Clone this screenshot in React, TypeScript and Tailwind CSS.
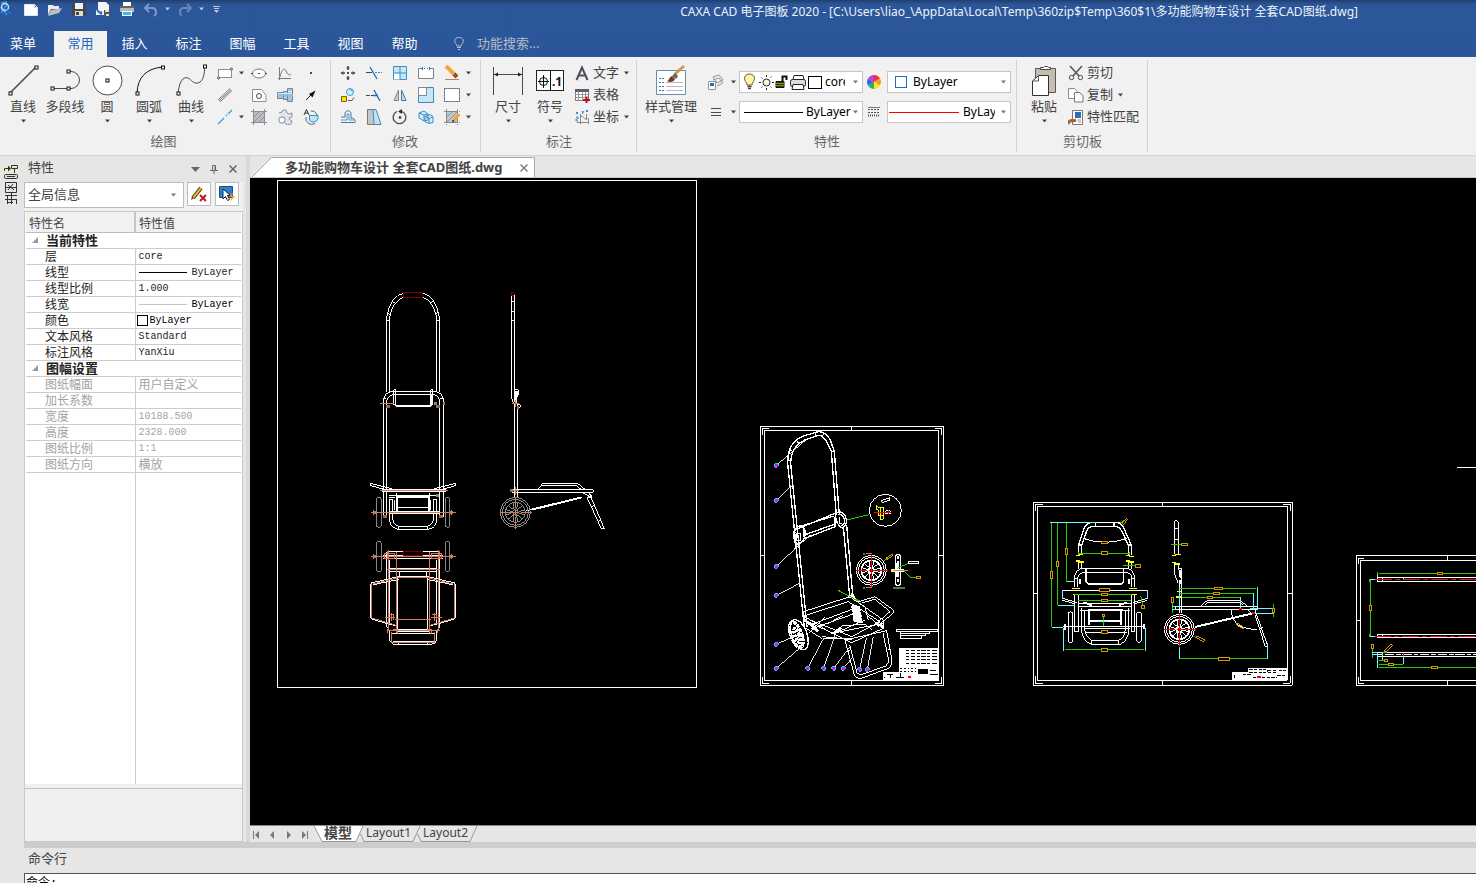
import React from 'react';

type IconProps = { children: React.ReactNode; size?: number; box?: string };

const Icon = ({ children, size = 16, box }: IconProps) => (
  <svg width={size} height={size} viewBox={box ?? `0 0 ${size} ${size}`} fill="none" stroke="#444c57" className="shrink-0" aria-hidden="true">
    {children}
  </svg>
);

const Caret = ({ className = 'fill-[#444]' }: { className?: string }) => (
  <svg width="5" height="4" viewBox="0 0 5 4" className={`shrink-0 ${className}`} aria-hidden="true">
    <path d="M0 0.5h5L2.5 3.5z" />
  </svg>
);

const Node = ({ x, y }: { x: number; y: number }) => (
  <rect x={x - 1.5} y={y - 1.5} width="3" height="3" fill="#fff" stroke="#111" />
);

/* ---------- title bar ---------- */

const quickActions = [
  {
    label: '新建',
    icon: <path d="M1.5 3.5h10l3 3v8h-13z M11.5 3.5v3h3" fill="#fff" stroke="#dde6f2" />,
  },
  {
    label: '打开',
    icon: (
      <g stroke="none">
        <path d="M1 4h5l1 1h5v3H4L1 14z" fill="#e9e9e9" />
        <path d="M4 9l11-2-3 5-11 3z" fill="#bdbdbd" />
      </g>
    ),
  },
  {
    label: '保存',
    icon: (
      <g stroke="none">
        <path d="M1 2h14v13H1z" fill="#474747" />
        <path d="M4 2h8v6H4z" fill="#f2f2f2" />
        <path d="M4 10h8v5H4z" fill="#ddd" />
        <path d="M5 11h3v3H5z" fill="#444" />
      </g>
    ),
  },
  {
    label: '另存为',
    icon: (
      <g stroke="none">
        <path d="M3 1h8l3 3v10H1V9h2z" fill="#f4f4f4" />
        <path d="M2 9l3 3 2-1M5 12l2 1" stroke="#2f6fb5" strokeWidth="2" />
        <path d="M9 9h6v6H9z" fill="#555" />
        <path d="M10 9h4v2h-4zM11 13h3v2h-3z" fill="#ddd" />
      </g>
    ),
  },
  {
    label: '打印',
    icon: (
      <g stroke="none">
        <path d="M4 1h8v4H4z" fill="#fff" />
        <path d="M1 5h14v6H1z" fill="#b9b9b9" />
        <path d="M1 5h14v2H1z" fill="#666" />
        <path d="M3 10h10v5H3z" fill="#fff" />
        <path d="M4 11h8v3H4z" fill="#38bdea" />
      </g>
    ),
  },
];

const TitleBar = () => (
  <div className="flex h-[31px] items-start bg-linear-to-b from-[#213f6e] to-[#2b579a] to-15%">
    <div className="flex h-[18px] items-center">
      <svg width="20" height="16" viewBox="0 0 20 16" fill="none" className="mr-[3px]" aria-hidden="true">
        <path d="M1 2l6-1M1 6l6 8M7 3l-6 9" stroke="#2e8fe8" strokeWidth="2" />
        <circle cx="5" cy="6" r="3.500" stroke="#bfe0ff" strokeWidth="1.500" />
        <path d="M7 9l4 4" stroke="#1671d4" strokeWidth="2" />
      </svg>
      <div className="flex gap-2">
        {quickActions.map((a) => (
          <button key={a.label} aria-label={a.label} type="button">
            <Icon>{a.icon}</Icon>
          </button>
        ))}
      </div>
      <button type="button" aria-label="撤销" className="ml-2 flex items-center gap-[6px]">
        <Icon>
          <path d="M6 3L2 7l4 4M2 7h7c5 0 5 6 2 8" stroke="#7b9aca" strokeWidth="2" />
        </Icon>
        <Caret className="fill-[#b9c6dd]" />
      </button>
      <button type="button" aria-label="重做" className="ml-[7px] flex items-center gap-[6px]">
        <Icon>
          <path d="M10 3l4 4-4 4M14 7H7c-5 0-5 6-2 8" stroke="#6787bb" strokeWidth="2" />
        </Icon>
        <Caret className="fill-[#b9c6dd]" />
      </button>
      <button type="button" aria-label="自定义快速访问" className="ml-[9px] pt-[2px]">
        <svg width="7" height="8" viewBox="0 0 7 8" fill="#c3cbd8">
          <path d="M0 0h7v1H0zM1 2h5v1H1zM1 4h5L3.500 7z" />
        </svg>
      </button>
    </div>
    <h1 className="mr-[118px] ml-auto pt-[3px] text-[12px] leading-[18px] whitespace-nowrap text-[#eef2f8]">
      CAXA CAD 电子图板 2020 - [C:\Users\liao_\AppData\Local\Temp\360zip$Temp\360$1\多功能购物车设计 全套CAD图纸.dwg]
    </h1>
  </div>
);

const menus = ['常用', '插入', '标注', '图幅', '工具', '视图', '帮助'];

const MenuBar = () => (
  <nav className="flex h-[26px] text-[13px] leading-[22px]">
    <button type="button" className="w-[46px] pb-[3px] text-white">菜单</button>
    <div className="ml-2 flex gap-[1px]">
      {menus.map((m, i) => (
        <button key={m} type="button" className={i === 0 ? 'w-[53px] bg-[#f1f1f1] pb-[3px] text-[#1e66c0]' : 'w-[53px] pb-[3px] text-white'}>
          {m}
        </button>
      ))}
    </div>
    <label className="ml-[23px] flex items-center gap-[13px] pb-[3px]">
      <svg width="10" height="13" viewBox="0 0 10 13" fill="none" stroke="#b7bfcc" className="mt-[2px]" aria-hidden="true">
        <path d="M3 9C3 7 0.700 6.500 0.700 4.200A4.300 4 0 0 1 9.300 4.200C9.300 6.500 7 7 7 9z" />
        <path d="M3 10.500h4M4 12.500h2" />
      </svg>
      <input type="text" aria-label="功能搜索" placeholder="功能搜索..." className="w-24 bg-transparent outline-none placeholder:text-[#b5bbc5]" />
    </label>
  </nav>
);

/* ---------- ribbon ---------- */

const Group = ({ title, width, children }: { title: string; width: string; children: React.ReactNode }) => (
  <section aria-label={title} className={`mt-[3px] mb-[3px] flex shrink-0 flex-col border-r border-[#d2d2d2] ${width}`}>
    <div className="flex h-[71px]">{children}</div>
    <div className="pr-[5px] text-center text-[13px] leading-[20px] text-[#666]">{title}</div>
  </section>
);

type BigProps = { label: string; icon: React.ReactNode; width?: string; caret?: boolean };

const BigButton = ({ label, icon, width = 'w-[42px]', caret = true }: BigProps) => (
  <button type="button" className={`flex shrink-0 flex-col items-center pt-[4px] text-[13px] leading-[20px] whitespace-nowrap text-[#444] ${width}`}>
    <Icon size={32}>{icon}</Icon>
    {label}
    {caret && <span className="mt-[3px]"><Caret /></span>}
  </button>
);

const drawTools: BigProps[] = [
  { label: '直线', icon: <><path d="M3 29L29 3" strokeWidth="1.600" /><Node x={3.5} y={29.5} /><Node x={29.5} y={3.5} /></> },
  { label: '多段线', caret: false, icon: <><path d="M3 24.500H22a8.500 8.500 0 0 0 0-17H19" /><Node x={3.5} y={24.5} /><Node x={19.5} y={24.5} /><Node x={19.5} y={7.5} /></> },
  { label: '圆', icon: <><circle cx="16.500" cy="16.500" r="14.500" fill="#fff" /><Node x={16.5} y={16.5} /></> },
  { label: '圆弧', icon: <><path d="M4 29Q5 5 30 3" stroke="#111" /><Node x={4.5} y={29.5} /><Node x={30} y={3.5} /></> },
  { label: '曲线', icon: <><path d="M3 30C4 18 8 12 13 14C17 16 18 20 23 19C29 17 29 10 30 2" /><Node x={3.5} y={29.5} /><Node x={30} y={2.5} /></> },
];

type Small = { label: string; icon: React.ReactNode; caret?: boolean };

const drawGrid: Small[] = [
  { label: '矩形', caret: true, icon: <><rect x="1.500" y="4.500" width="13" height="8" fill="#fff" stroke="#8b8f94" /><circle cx="14.500" cy="4" r="1" fill="#fff" /><circle cx="1.500" cy="13" r="1" fill="#fff" /></> },
  { label: '椭圆', icon: <><ellipse cx="8" cy="8.500" rx="6.500" ry="4.500" fill="#fff" stroke="#777" /><path d="M7 8.500h2M0 8.500h2M14 8.500h2" /></> },
  { label: '公式曲线', icon: <path d="M2.500 2v13M1 13.500h13M3 12C5 3 8 3 9 6S12 10 14 10" stroke="#777c83" /> },
  { label: '点', icon: <path d="M7 8h2" strokeWidth="2" /> },
  { label: '平行线', icon: <path d="M1 13L13 1.500M3 15L15 3.500M2 14L14 2.500" stroke="#777" /> },
  { label: '孔', icon: <><path d="M1.500 2.500h9l4.500 6v6H1.500z" fill="#fff" stroke="#8b8f94" /><circle cx="8" cy="9" r="2.500" /></> },
  { label: '轴', icon: <><path d="M0.500 5.500h6v6h-6zM6.500 4.500h4v8h-4zM10.500 1.500h5v13h-5z" fill="#a9c4dc" stroke="#6d8aa2" /><path d="M0 8.500h16" stroke="#7cc4f0" strokeWidth="1.500" /><path d="M1 6.500h14M11 4.500h4" stroke="#e3eef8" /></> },
  { label: '箭头', icon: <><path d="M3 13l5-5" stroke="#222" /><path d="M12.500 3.500L6 7l3.500 3.500z" fill="#111" stroke="none" /></> },
  { label: '中心线', caret: true, icon: <path d="M1 15L7 9M9 7l1-1M11 5l4-4" stroke="#27a3e0" strokeWidth="1.300" /> },
  { label: '填充', icon: <><path d="M2.500 2.500h11v11h-11z" fill="#b9bcc1" /><path d="M0 2.500h16M0 13.500h16M2.500 0v16M13.500 0v16" stroke="#8b8f94" /><path d="M3 8l5-5M3 13L13 3M8 13l5-5" stroke="#909399" /></> },
  { label: '块', icon: <><path d="M2 4l3-1 1-2h3l1 3 2 1 3-1v4l-3 1 1 2 2 1-1 3-4 1-2-2" fill="#dfe3ea" stroke="#8a93a0" /><circle cx="5" cy="11" r="3.200" fill="#fff" stroke="#7a8490" /></> },
  { label: '局部放大', icon: <><path d="M6.500 6.500h8.500v3a5 5 0 0 1-8.500 2z" fill="#bfe2f8" stroke="#2a8fd0" /><path d="M3 8a6 6 0 0 0 9 6.500M8 2a6 6 0 0 1 6 4" stroke="#666" /><path d="M1 6L3.500 0.500 6 6M2 4h3" stroke="#333" /></> },
];

const editGrid: Small[] = [
  { label: '平移', icon: <><path d="M8 1v4M8 11v4M1 8h4M11 8h4" strokeWidth="1.500" /><path d="M6 3.500L8 1l2 2.500zM6 12.500L8 15l2-2.500zM3.500 6L1 8l2.500 2zM12.500 6L15 8l-2.500 2z" fill="#444c57" stroke="none" /><path d="M7 8h2" strokeWidth="2" /></> },
  { label: '裁剪', icon: <><path d="M0 7.500h6" stroke="#444" /><path d="M9 7.500h7" stroke="#2a8fd0" strokeDasharray="2 1" /><path d="M4 2l7 12" stroke="#1470c8" strokeWidth="1.300" /></> },
  { label: '阵列', icon: <><path d="M1.500 1.500h13v13h-13z" fill="#c5e6fa" stroke="#3f8fc0" /><path d="M2 8.500h6v6H2z" fill="#fff" stroke="none" /><path d="M8 1v14M1 8h14" stroke="#3f8fc0" /></> },
  { label: '打断', icon: <><path d="M5 3.500H0.500v10h15v-10H11" fill="#fff" stroke="#7d8288" /><path d="M4.500 2v3M11.500 2v3M6 3.500h1M9 3.500h1" stroke="#1470c8" /></> },
  { label: '删除', caret: true, icon: <><path d="M2 1l8 8" stroke="#efa63a" strokeWidth="4" /><path d="M10 9l3 3" stroke="#8f4a20" strokeWidth="4" /><path d="M1 14.500h14" stroke="#c77b5a" /></> },
  { label: '平移复制', icon: <><circle cx="10" cy="5" r="3.500" fill="#d5ecfa" stroke="#4a9cd0" /><path d="M9 2l5 3" stroke="#4a9cd0" /><path d="M1.500 9.500h5v5h-5z" fill="#ffe100" stroke="#6b6b00" /><path d="M8 13.500h4l2-3" stroke="#a33" /></> },
  { label: '延伸', icon: <><path d="M0 8.500h4M5 8.500h2" stroke="#444" /><path d="M7 8.500h5M8 3l6 11" stroke="#1470c8" strokeWidth="1.300" /></> },
  { label: '镜像', icon: <><path d="M6.500 3v10.500H2z" fill="#ccc" stroke="#888" /><path d="M9.500 3v10.500H14z" fill="#bfe2f8" stroke="#55758c" /></> },
  { label: '缩放', icon: <><path d="M0.500 0.500h15v15H0.500z" fill="#c5e6fa" stroke="#4f86a5" /><path d="M0.500 0.500h8v8h-8z" fill="#fff" stroke="#7a8a94" /></> },
  { label: '分解', caret: true, icon: <><path d="M0.500 1.500h15v13H0.500z" fill="#fff" stroke="#a3b4bf" /><path d="M0.500 1.500h15v13H0.500z" strokeDasharray="2 1" stroke="#5b6f7d" /></> },
  { label: '等距线', icon: <><path d="M1 13.500h14c1-4-3-5-4-4V4c-1-3-5-3-6 0v4H1" stroke="#55758c" /><path d="M1 11h6V5h2v6h5" stroke="#3f9fd8" /></> },
  { label: '拉伸', icon: <><path d="M1.500 0.500h8v15h-8z" fill="#c3c6ca" stroke="#777" /><path d="M7 0.500h3l5 15H8z" fill="#bfe2f8" stroke="#4f86a5" /></> },
  { label: '旋转', icon: <><path d="M10 2.500A6.300 6.300 0 1 1 5 2.500" strokeWidth="1.300" /><path d="M10 0l-4 2.500 4 2.500z" fill="#333" stroke="none" /><circle cx="8" cy="8.500" r="1" fill="#333" /></> },
  { label: '三维', icon: <path d="M1 4l5-2 4 3v6l-4 1-5-3zM1 4l5 2v6M6 6l4-1M7 7.500l5-2 3 2v6l-4 1-4-2zM7 7.500l4 2v5M11 9.500l4-2" fill="#d5ecfa" stroke="#3d8fc8" /> },
  { label: '编辑填充', caret: true, icon: <><path d="M2.500 2.500h11v11h-11z" fill="#c3c6ca" stroke="#777" /><path d="M0 2.500h16M0 13.500h16M2.500 0v16M13.500 0v16" stroke="#8b8f94" strokeDasharray="2 1" /><path d="M3 8l5-5M3 13L13 3" stroke="#909399" /><path d="M10 11l5-6" stroke="#f0a432" strokeWidth="3" /><path d="M8.500 12.500l1.500-1" stroke="#333" strokeWidth="2" /></> },
];

const SmallButton = ({ label, icon, caret }: Small) => (
  <button type="button" aria-label={label} className={`flex h-[22px] items-center pl-[5px] ${caret ? 'w-[34px] gap-[6px]' : 'w-[26px]'}`}>
    <Icon>{icon}</Icon>
    {caret && <Caret />}
  </button>
);

const RowButton = ({ label, icon, caret }: Small) => (
  <button type="button" className="flex h-[22px] items-center gap-[3px] text-[13px] leading-[20px] whitespace-nowrap text-[#444]">
    <Icon>{icon}</Icon>
    <span className="pb-[2px]">{label}</span>
    {caret && <span className="ml-[2px]"><Caret /></span>}
  </button>
);

const annotationRows: Small[] = [
  { label: '文字', caret: true, icon: <path d="M2.500 15L8 2.500 13.500 15M5 10.500h6" stroke="#4a4f57" strokeWidth="2" /> },
  { label: '表格', icon: <><path d="M1.500 2.500h13v11h-13z" fill="#fff" stroke="#777" /><path d="M1 3.500h14" stroke="#59626d" strokeWidth="3" /><path d="M1 7.500h13M1 10.500h13M4.500 5v9M8.500 5v9M11.500 5v9" stroke="#999" /><path d="M9 13h7M12.500 9.500v7" stroke="#c00d1e" strokeWidth="2" /></> },
  { label: '坐标', caret: true, icon: <><path d="M6.500 5v10M3 13.500h12M7 7c3 0 2 3 5 3M12.500 5v6M14.500 9v6" stroke="#888" /><path d="M2 3l2 2m0-2L2 5M8 2l1 2m1-2L8 5M12 1l2 2m0-2l-2 2M2 8h2v2H2v2h2" stroke="#3b8ccb" /></> },
];

const clipRows: Small[] = [
  { label: '剪切', icon: <><path d="M2 1l9 10M14 1L5 11" stroke="#5d6269" strokeWidth="1.800" /><circle cx="3.500" cy="12.500" r="2.200" /><circle cx="12.500" cy="12.500" r="2.200" /></> },
  { label: '复制', caret: true, icon: <><path d="M0.500 1.500h6l3 3v7h-9z" fill="#fff" stroke="#8a8a8a" /><path d="M6.500 5.500h5l3.500 3v6.500H6.500z" fill="#fff" stroke="#777" /></> },
  { label: '特性匹配', icon: <><path d="M4.500 1.500h10v14h-10z" fill="#fff" stroke="#777" /><path d="M7 3h6v6H7z" fill="#2c6fae" stroke="none" /><path d="M9 11h4M10 13h3" stroke="#999" /><path d="M0 15c1-3 3-4 5-3l3-1" stroke="#a9622c" strokeWidth="3" /></> },
];

type ComboProps = { label: string; value: string; lead: React.ReactNode; caretGap?: string };

const Combo = ({ label, value, lead, caretGap = 'ml-[6px]' }: ComboProps) => (
  <div className="flex h-[22px] w-[124px] items-center border border-[#c6c6c6] bg-white pr-[4px]">
    {lead}
    <select aria-label={label} className="min-w-0 flex-1 appearance-none overflow-hidden bg-transparent text-[12px] leading-[18px] text-black outline-none">
      <option>{value}</option>
    </select>
    <span className={caretGap}><Caret className="fill-[#777]" /></span>
  </div>
);

const LayerIcons = () => (
  <svg width="85" height="20" viewBox="0 0 85 20" fill="none" stroke="#222" className="shrink-0" aria-hidden="true">
    <path d="M7 13C7 10 4.500 9.500 4.500 6.500a5 4.500 0 0 1 10 0C14.500 9.500 12 10 12 13z" fill="#fff4a8" stroke="#6a5a20" />
    <path d="M7.500 14.500h4M8 16.500h3" stroke="#444" strokeWidth="1.500" />
    <circle cx="26.500" cy="10.500" r="3.500" fill="#fffbe0" />
    <path d="M26.500 3v2M26.500 16v2M19 10.500h2M32 10.500h2M21.500 5.500l1 1M30.500 5.500l1-1M21.500 15.500l1-1M30.500 14.500l1 1" />
    <path d="M36 9.500h8v6h-8z" fill="#3a3a00" stroke="#111" />
    <path d="M36 11.500h8M36 13.500h8" stroke="#8c8c20" />
    <path d="M42.500 9V4.500h4V8" stroke="#111" strokeWidth="2" />
    <path d="M54 3.500h9l1 4H53z" fill="#fff" />
    <rect x="50.500" y="7.500" width="15" height="7" rx="2" fill="#ddd" />
    <path d="M53 12.500h10l1 5H52z" fill="#fff" />
    <rect x="68.500" y="4.500" width="13" height="12" fill="#fff" stroke="#000" />
  </svg>
);

const wedges = [
  ['#f03030', 'M7 7V0A7 7 0 0 1 13 3.500z'],
  ['#f0a020', 'M7 7L13 3.500A7 7 0 0 1 13 10.500z'],
  ['#f5e430', 'M7 7L13 10.500A7 7 0 0 1 7 14z'],
  ['#2cb54a', 'M7 7V14A7 7 0 0 1 1 10.500z'],
  ['#3b62e8', 'M7 7L1 10.500A7 7 0 0 1 1 3.500z'],
  ['#c23be0', 'M7 7L1 3.500A7 7 0 0 1 7 0z'],
];

const Ribbon = () => (
  <div className="flex h-[99px] overflow-hidden border-b border-[#d5d5d5] bg-[#f1f1f1]">
    <Group title="绘图" width="w-[331px] pl-[2px]">
      {drawTools.map((t) => <BigButton key={t.label} {...t} />)}
      <div className="grid grid-cols-[34px_26px_26px_26px] content-start pt-[2px]">
        {drawGrid.map((t) => <SmallButton key={t.label} {...t} />)}
      </div>
    </Group>
    <Group title="修改" width="w-[150px] pl-[4px]">
      <div className="grid grid-cols-[26px_26px_26px_26px_34px] content-start pt-[2px]">
        {editGrid.map((t) => <SmallButton key={t.label} {...t} />)}
      </div>
    </Group>
    <Group title="标注" width="w-[156px] pl-[6px]">
      <BigButton label="尺寸" icon={<><path d="M1.500 3v28M30.500 3v28M2 10.500h28" /><path d="M2 10.500l4-2v4zM30 10.500l-4-2v4z" fill="#222" stroke="none" /></>} />
      <BigButton
        label="符号"
        icon={
          <>
            <rect x="2.500" y="6.500" width="27" height="20" fill="#fff" stroke="#222" />
            <path d="M16.500 6v21M4 17.500h11M9.500 11v13" stroke="#111" />
            <circle cx="9.500" cy="17.500" r="4" stroke="#111" />
            <text x="18" y="22" fontSize="12" fontWeight="700" fill="#111" stroke="none">.1</text>
          </>
        }
      />
      <div className="ml-[3px] pt-[2px]">
        {annotationRows.map((t) => <RowButton key={t.label} {...t} />)}
      </div>
    </Group>
    <Group title="特性" width="w-[380px] pl-[6px]">
      <BigButton
        label="样式管理"
        width="w-[56px]"
        icon={
          <>
            <path d="M1.500 6.500h29v24h-29z" fill="#fff" stroke="#6f8fa8" />
            <path d="M4 14.500h5M4 18.500h5M4 22.500h5M4 26.500h5" stroke="#3974b5" strokeDasharray="2 1" />
            <path d="M11 18.500h17M11 22.500h17M11 26.500h17" stroke="#b9bcc8" />
            <path d="M20 10l9-8" stroke="#d8954a" strokeWidth="3" />
            <path d="M17 12l3-3 3 3-2 3z" fill="#666" stroke="none" />
            <path d="M12 17c2 0 2-4 5-5l3 3c-1 3-5 4-8 2z" fill="#7a3c12" stroke="none" />
          </>
        }
      />
      <div className="ml-[9px] flex flex-col gap-[8px] pt-[11px]">
        <button type="button" aria-label="图层" className="flex h-[22px] items-center gap-[7px]">
          <Icon>
            <path d="M5 3l6-2 4 5-6 3zM5 6l6-2 4 5-6 3" fill="#eef0f2" stroke="#8d949c" />
            <path d="M0.500 7.500h7v8h-7z" fill="#fff" stroke="#8d949c" />
            <path d="M2 9h4v3H2z" fill="#2c6fae" stroke="none" />
          </Icon>
          <Caret />
        </button>
        <button type="button" aria-label="线宽" className="flex h-[22px] items-center gap-[7px]">
          <Icon><path d="M3 4.500h10M3 8.500h10M3 11.500h10" strokeWidth="1.200" /></Icon>
          <Caret />
        </button>
      </div>
      <div className="ml-[3px] flex flex-col gap-[8px] pt-[11px]">
        <Combo label="图层" value="core" caretGap="ml-[8px]" lead={<LayerIcons />} />
        <Combo label="线型" value="ByLayer" caretGap="ml-[1px]" lead={<span className="mr-[3px] ml-[4px] h-px w-[59px] shrink-0 bg-black" />} />
      </div>
      <div className="ml-[4px] flex flex-col items-center gap-[8px] pt-[11px]">
        <span className="flex h-[22px] items-center">
          <svg width="14" height="14" viewBox="0 0 14 14" aria-hidden="true">
            {wedges.map(([fill, d]) => <path key={d} d={d} fill={fill} />)}
          </svg>
        </span>
        <span className="flex h-[22px] items-center">
          <Icon size={14} box="0 0 14 14">
            <path d="M1 2.500h12" stroke="#777" />
            <path d="M1 4.500h12M1 7.500h12" stroke="#555" strokeDasharray="2 1" />
            <path d="M1 10.500h12" stroke="#555" strokeWidth="2" strokeDasharray="1 1" />
          </Icon>
        </span>
      </div>
      <div className="ml-[6px] flex flex-col gap-[8px] pt-[11px]">
        <Combo label="颜色" value="ByLayer" lead={<span className="mr-[6px] ml-[7px] size-3 shrink-0 border border-[#1470c8]" />} />
        <Combo label="线宽" value="ByLayer" lead={<span className="mr-[4px] ml-[1px] h-px w-[70px] shrink-0 bg-[#ff0000]" />} />
      </div>
    </Group>
    <Group title="剪切板" width="w-[131px] pl-[6px]">
      <BigButton
        label="粘贴"
        icon={
          <>
            <path d="M7.500 4.500h20v24h-20z" fill="#c5beb0" stroke="#55585c" />
            <path d="M12.500 5.500v-2h3l1-1h3l1 1h2v2z" fill="#fff" stroke="#444" />
            <path d="M10.500 11.500L4.500 17v14.500h16v-20z" fill="#fff" stroke="#333" />
            <path d="M10.500 11.500V17h-6" stroke="#555" />
          </>
        }
      />
      <div className="ml-[3px] pt-[2px]">
        {clipRows.map((t) => <RowButton key={t.label} {...t} />)}
      </div>
    </Group>
  </div>
);

/* ---------- property panel ---------- */

type Prop = { name: string; value: React.ReactNode };

const current: Prop[] = [
  { name: '层', value: 'core' },
  { name: '线型', value: <span className="flex items-center gap-[5px]"><i className="w-[48px] border-t border-black" />ByLayer</span> },
  { name: '线型比例', value: '1.000' },
  { name: '线宽', value: <span className="flex items-center gap-[5px] text-black"><i className="w-[48px] border-t border-[#c4c4c4]" />ByLayer</span> },
  { name: '颜色', value: <span className="flex items-center gap-[2px] text-black"><i className="-ml-[2px] size-[11px] border border-black" />ByLayer</span> },
  { name: '文本风格', value: 'Standard' },
  { name: '标注风格', value: 'YanXiu' },
];

const sheet: Prop[] = [
  { name: '图纸幅面', value: <span className="block font-[Noto_Sans,Noto_Sans_CJK_SC,sans-serif] text-[12px]">用户自定义</span> },
  { name: '加长系数', value: '' },
  { name: '宽度', value: '10188.500' },
  { name: '高度', value: '2328.000' },
  { name: '图纸比例', value: '1:1' },
  { name: '图纸方向', value: <span className="block font-[Noto_Sans,Noto_Sans_CJK_SC,sans-serif] text-[12px]">横放</span> },
];

const PropRows = ({ title, rows, muted }: { title: string; rows: Prop[]; muted?: boolean }) => (
  <tbody className={muted ? 'text-[#a3a3a3]' : 'text-[#222]'}>
    <tr className="h-[16px] border-b border-[#cdcdcd]">
      <th colSpan={2} className="p-0 text-left font-bold text-[#222]">
        <span className="flex items-center pl-[6px] text-[13px] leading-[15px]">
          <svg width="6" height="6" viewBox="0 0 6 6" className="mr-[8px] fill-[#999]"><path d="M6 0v6H0z" /></svg>
          {title}
        </span>
      </th>
    </tr>
    {rows.map((r) => (
      <tr key={r.name} className="h-[16px] border-b border-[#cdcdcd]">
        <th className="border-r border-[#cdcdcd] p-0 pl-[19px] text-left font-normal">{r.name}</th>
        <td className="overflow-hidden p-0 pl-[3px] font-[Liberation_Mono,Noto_Sans_CJK_SC,monospace] text-[10px] leading-[15px] whitespace-nowrap">{r.value}</td>
      </tr>
    ))}
  </tbody>
);

const PropertyPanel = () => (
  <aside className="flex w-[219px] shrink-0 flex-col">
    <div className="flex h-[26px] items-center pr-[6px] pl-[4px] text-[13px] text-[#444]">
      <h2 className="mr-auto pb-[4px] leading-[22px]">特性</h2>
      <button type="button" aria-label="菜单" className="mr-[10px]">
        <svg width="9" height="5" viewBox="0 0 9 5" fill="#666"><path d="M0 0h9L4.500 5z" /></svg>
      </button>
      <button type="button" aria-label="固定" className="mr-[11px]">
        <svg width="8" height="9" viewBox="0 0 8 9" fill="none" stroke="#666"><path d="M2.500 5V0.500h3V5M0 5.500h8M4 6v3" /><path d="M5 1v4" /></svg>
      </button>
      <button type="button" aria-label="关闭">
        <svg width="8" height="8" viewBox="0 0 8 8" stroke="#666" strokeWidth="1.500"><path d="M0.500 0.500l7 7M7.500 0.500l-7 7" /></svg>
      </button>
    </div>
    <div className="flex h-[29px] gap-[3px] bg-[#f1f1f1]">
      <div className="flex h-[26px] w-[160px] items-center border border-[#bdbdbd] bg-white pr-[7px] pl-[3px]">
        <select aria-label="选择对象" className="mb-[2px] min-w-0 flex-1 appearance-none bg-transparent text-[13px] leading-[22px] text-[#444] outline-none">
          <option>全局信息</option>
        </select>
        <Caret className="fill-[#777]" />
      </div>
      <button type="button" aria-label="清除选择" className="flex size-[24px] items-center justify-center border border-[#bdbdbd] bg-white">
        <Icon>
          <path d="M2 12L10 2" stroke="#54480f" strokeWidth="4" />
          <path d="M2 12L10 2" stroke="#f0c040" strokeWidth="2" />
          <path d="M0 14l1-3 2 1z" fill="#333" stroke="none" />
          <path d="M9 9l6 6M15 9l-6 6" stroke="#b81c1c" strokeWidth="2" />
        </Icon>
      </button>
      <button type="button" aria-label="快速选择" className="ml-[1px] flex size-[24px] items-center justify-center border border-[#bdbdbd] bg-white">
        <Icon>
          <path d="M0.500 0.500h13v11h-13z" fill="#2f7fd0" stroke="#174f8c" />
          <path d="M4 3v10l2.500-2.500 2 4 2-1-2-4h3z" fill="#fff" stroke="#222" />
          <path d="M14 6l-4 5h3l-2 5 5-6h-3z" fill="#f59a1c" stroke="none" />
        </Icon>
      </button>
    </div>
    <div className="flex flex-1 flex-col border border-[#c8c8c8] bg-white px-[1px]">
      <table className="w-full table-fixed border-collapse text-[12px] leading-[15px]">
        <thead className="text-[#444]">
          <tr className="h-[20px] border-b border-[#bdbdbd] bg-[#f1f1f1]">
            <th className="w-[109px] border-r-2 border-[#c4c4c4] p-0 pt-[3px] pl-[3px] text-left font-normal">特性名</th>
            <th className="p-0 pt-[3px] pl-[3px] text-left font-normal">特性值</th>
          </tr>
        </thead>
        <PropRows title="当前特性" rows={current} />
        <PropRows title="图幅设置" rows={sheet} muted />
      </table>
      <div className="w-[110px] flex-1 border-r border-[#cdcdcd]" />
      <div className="-mx-[1px] h-[57px] bg-[#f0f0f0] pt-[4px]">
        <div className="border-t border-[#c0c0c0]" />
      </div>
    </div>
  </aside>
);

const SideStrip = () => (
  <div className="flex w-[24px] shrink-0 justify-center bg-[#e6e6e6] pr-[2px] pt-[7px]">
    <svg width="16" height="42" viewBox="0 0 16 42" fill="none" stroke="#333" aria-hidden="true">
      <path d="M0 1h15v16H0z" fill="#e9ead2" stroke="none" />
      <path d="M1.500 8V5.500h5" />
      <path d="M5 2.500v6l3-3z" fill="#333" stroke="none" />
      <path d="M8.500 2.500h6v3h-6zM11.500 6v4" />
      <rect x="1.500" y="11.500" width="13" height="4" rx="1" fill="#ddd" />
      <path d="M4 13.500h8M2.500 19.500h11v10h-11zM5 22l6 5M10 21l-5 6M2 24.500h11" />
      <path d="M2 32.500h12M4.500 32v9M8.500 30v11M13.500 36v5M2 36.500h12M4 39.500h6" />
    </svg>
  </div>
);

/* ---------- drawing canvas ---------- */

type Pt = [number, number];

// dimension line label boxes
const Tags = ({ items }: { items: [number, number, number, number][] }) => (
  <g stroke="#d69a00" fill="#000">
    {items.map(([x, y, w, h]) => <rect key={`${x}-${y}`} x={x} y={y} width={w} height={h} />)}
  </g>
);

type WheelProps = { cx: number; cy: number; color: string; cross: string; heavy?: boolean };

const Wheel = ({ cx, cy, color, cross, heavy }: WheelProps) => (
  <g>
    <g stroke={color}>
      <circle cx={cx} cy={cy} r="45" />
      <circle cx={cx} cy={cy} r="39" />
      <circle cx={cx} cy={cy} r="30" strokeWidth={heavy ? 5 : 3} />
      <circle cx={cx} cy={cy} r="8" strokeWidth={heavy ? 5 : 3} />
      {[0, 60, 120, 180, 240, 300].map((a) => (
        <path key={a} transform={`rotate(${a} ${cx} ${cy})`} d={`M${cx - 4} ${cy - 9}L${cx - 7} ${cy - 28}M${cx + 4} ${cy - 9}L${cx + 7} ${cy - 28}`} />
      ))}
    </g>
    <path d={`M${cx - 46} ${cy}H${cx + 50}M${cx} ${cy - 47}V${cy + 54}`} stroke={cross} strokeDasharray="34 4 20 4" />
  </g>
);

const Cart = () => (
  <g transform="translate(360 280) scale(.33333)" stroke="#fff" strokeWidth="3">
    {/* front view */}
    <path d="M80 335V112Q92 46 130 40M190 40Q226 48 238 112V335M89 335V112Q98 64 130 52M190 52Q220 64 230 112V335" />
    <path d="M80 121H89M230 121H238M84 100l7 4M228 100l8-3M99 65l8 6M212 70l7-6" />
    <path d="M70 710V360Q74 336 98 334H225Q247 338 251 360V710H238V362Q236 346 218 343H102Q84 346 80 362V710Z" />
    <path d="M101 330h6v45h-6zM212 330h6v45h-6zM106 346V378H214V346M70 357h9M240 357h10" />
    <path d="M107 377H214" strokeWidth="6" />
    <path d="M31 610L95 626M31 610V617L70 627M287 610L222 626M287 610V617L250 627M67 629H258M67 636H258" />
    <path d="M86 646H236M86 653H105M110 640V702M208 640V702M110 683H208M86 694H236M86 701H236M103 660V690M213 660V690" />
    <path d="M110 650H208" strokeWidth="8" />
    <path d="M110 645V702M208 645V702" strokeWidth="6" />
    <path d="M89 658V722Q92 744 115 748H205Q228 744 230 722V658M98 658V718Q102 736 118 739H202Q218 736 220 718V658M115 739v9M203 739v9M89 658h9M220 658h10" />
    <rect x="130" y="38" width="59" height="14" stroke="#7c0000" />
    <g stroke="#858585">
      <rect x="49" y="652" width="15" height="90" rx="7" />
      <rect x="256" y="652" width="14" height="90" rx="7" />
      <rect x="49" y="784" width="15" height="92" rx="7" />
      <rect x="256" y="784" width="14" height="92" rx="7" />
      <path d="M222 370h10M248 370h8M228 646h8" strokeWidth="8" />
      <path d="M38 697h12M270 697h10M38 829h12M270 829h10" strokeWidth="10" />
    </g>
    <path d="M78 381h11M229 381h10M70 710h11M238 710h12" stroke="#a06a42" strokeWidth="9" />
    <g stroke="#d9795c">
      <path d="M60 370H103M60 632H265M34 697H287M34 829H287" />
      <path d="M42 690v14M276 690v14M42 822v14M276 822v14" />
    </g>
    {/* top view */}
    <path d="M80 816V1040L89 1052V1080Q92 1090 102 1093H215Q228 1090 230 1080V1052L239 1040V816ZM89 840V1035M230 840V1035M70 826H250M70 835H250M89 866H230M89 874H230M118 874V890M200 874V890M95 1062H225M98 1084H222M115 1084v9M203 1084v9" />
    <path d="M118 889L34 909L31 915V1010L37 1018L112 1039M200 889L284 909L287 915V1010L281 1018L206 1039M118 889H200M118 898L40 914M200 898L278 914M110 1048H210M110 1055H210M110 1020H210" />
    <rect x="130" y="815" width="59" height="13" stroke="#7c0000" />
    <path d="M114 895V1055M204 895V1055" />
    <g stroke="#d9795c">
      <path d="M86 810V1050M236 810V1050M110 815V1060M208 815V1060M80 868H240M110 894H210M104 1020H214M80 1052H240M95 1055V1088H223V1055" />
      <path d="M36 912V1014L108 1036M283 912V1014L210 1036M118 892L40 912M200 892L280 912M76 1012H106M212 1012H245M95 998V1022M223 998V1022M82 812v24M240 812v24M88 1005h14v14M216 1005h14v14M74 820h30v16h-30zM214 820h30v16h-30zM84 1046v12M234 1046v12M100 1048h14v14M202 1048h14v14" />
    </g>
    {/* side view */}
    <path d="M454 48V350L461 372M463 40V365M454 66h9M454 96h9M454 121h9M463 330H475V345L470 352V370M463 372V655M473 385V655M466 350h8" />
    <path d="M466 332v28M472 332v16" strokeWidth="6" />
    <circle cx="476" cy="377" r="5" />
    <circle cx="458" cy="42" r="5" stroke="#900000" />
    <path d="M455 629H700V637H455ZM534 627L547 612H655L674 627M545 618H650L662 627M665 637L690 650M688 640L733 746M680 650L724 746M724 746L733 746M696 680l9-4M714 724l8-4" />
    <path d="M495 694L515 688" />
    <path d="M515 689L665 652" strokeWidth="6" />
    <circle cx="690" cy="649" r="5" />
    <path d="M450 632h8M472 384h5" stroke="#a06a42" strokeWidth="9" />
    <path d="M455 370H478M455 632H478M466 360V382M466 622V645" stroke="#d9795c" />
    <Wheel cx={466} cy={697} color="#8c8c8c" cross="#d9795c" />
  </g>
);

const balloons: [Pt, Pt][] = [
  [[64, 136], [150, 62]],
  [[64, 241], [112, 196]],
  [[64, 439], [165, 345]],
  [[64, 526], [134, 490]],
  [[64, 673], [118, 648]],
  [[64, 745], [145, 675]],
  [[158, 745], [206, 655]],
  [[206, 745], [240, 645]],
  [[236, 745], [285, 680]],
  [[265, 745], [290, 715]],
  [[314, 748], [334, 655]],
  [[337, 748], [355, 650]],
];

const AssemblySheet = () => (
  <g transform="translate(755 420) scale(.33333)" stroke="#fff" strokeWidth="3">
    <path d="M16 19H566V796H16ZM28 31H551V781H28Z" />
    <path d="M22 45V25H42M540 25H560V45M22 770V790H42M540 790H560V770M290 19V31M290 781V796M16 406H28M551 406H566" />
    <g strokeWidth="4">
      {/* folded tube frame */}
      <path d="M148 625L98 130Q98 65 145 48L190 35Q212 34 226 60L238 95L253 285M156 620L107 130Q108 78 150 60L190 46Q204 46 216 66L229 95L244 285" />
      <path d="M98 122h9M228 95h10M124 60l8 12M180 38l4 10M106 90l10 6M208 40l-8 10M102 200h9M117 385h10" />
      <path d="M120 335Q116 350 118 370M120 330L240 280M140 318L236 288M148 345L240 312M150 355L240 320V290M145 325V350" />
      <path d="M265 320L284 530M275 315L293 525" />
      <path d="M240 280Q258 268 272 290Q280 315 262 324Q244 318 240 280M250 285Q262 280 268 296T258 318M254 292v18h8" />
      <path d="M118 330Q138 305 150 330Q154 365 128 372Q110 360 118 330M124 340h12v22h-12z" />
    </g>
    {/* base platform */}
    <path d="M145 575L285 530L385 600V625L290 668L150 600ZM155 585L280 545L375 605L290 650L165 600M145 575V620L200 655M165 615L300 565M175 625L300 580M150 590L230 640L385 610M200 650L290 658M206 657H290M240 640L330 600" />
    <path d="M160 640L210 590M220 610L265 585M230 640L262 618L330 612L352 630M300 560V605M310 560L318 610M340 600L330 560L290 535" />
    <path d="M290 555L314 560L322 610L296 604Z" fill="#fff" strokeDasharray="7 3" />
    <path d="M145 598l40 30M170 622l20 12M290 520l10 20M278 530h20M235 640l25-16M360 608l24 12" strokeWidth="7" />
    <path d="M310 545L360 530L415 570V580L370 615M322 548L360 538L405 575L370 605M370 615L388 628M365 600l20 20M340 590q20 10 30 30" />
    <path d="M270 660L298 765Q305 778 322 774L400 745Q412 738 411 720L395 632M284 675L306 758Q310 765 322 763L392 738Q402 732 400 715L384 640M270 660L395 632M285 690l-8 4M400 690h8" />
    <ellipse cx="133" cy="644" rx="23" ry="47" transform="rotate(-20 133 644)" strokeWidth="4" />
    <ellipse cx="124" cy="644" rx="16" ry="40" transform="rotate(-20 124 644)" strokeWidth="10" strokeDasharray="12 2" />
    <ellipse cx="126" cy="646" rx="6" ry="22" transform="rotate(-20 126 646)" strokeWidth="10" strokeDasharray="8 3" />
    {/* details */}
    <circle cx="391" cy="271" r="48" />
    <path d="M378 242l26-9v7l-22 8z" />
    <path d="M364 256v14h6v18h16v-24h-14zM376 264v34h9v-20" stroke="#ff0" />
    <path d="M392 272h14v10h-14z" />
    <path d="M358 277H408M390 277h12M400 271v12" stroke="#f00" />
    <Wheel cx={349} cy={451} color="#fff" cross="#f00" heavy />
    <rect x="422" y="404" width="15" height="92" rx="6" strokeWidth="4" />
    <path d="M429 408v84" strokeWidth="6" strokeDasharray="8 6" />
    <path d="M429 430v40M415 451h32" strokeWidth="9" />
    <path d="M408 451h50" stroke="#d9795c" />
    <path d="M410 448v8" stroke="#ff0" strokeWidth="6" />
    <path d="M460 424h31v7h-31z" />
    <path d="M275 300L342 284M250 512L310 543M300 537l15 6M386 422l14-6M425 446l35-16M445 452l22 20h15" stroke="#30c800" />
    <path d="M250 512h6M392 415l20-13 3 4-18 11zM484 469h13v6h-13z" stroke="#d69a00" />
    <path d="M414 503h36M324 402h6M324 503h6" stroke="#4f7a3a" strokeWidth="6" />
    <path d="M333 402h18M333 503h18" stroke="#d9795c" />
    {/* title block */}
    <path d="M424 628H549V635H424ZM436 635V655H500V648H512V641H524V635M436 641H524M436 648H512" />
    <path d="M432 684H551V781H385V756H432Z" fill="#fff" stroke="none" />
    <g stroke="#000">
      <path d="M453 693H545M453 702H545M453 711H545M453 720H545M453 732H545" strokeDasharray="9 5 14 4" />
      <path d="M436 747H484M436 756H484" strokeDasharray="5 6" />
      <path d="M526 752h16M524 765h24M395 764h20M390 770v4M408 765v10M424 772h24M436 760v12" />
    </g>
    <path d="M489 747H518V762H489Z" fill="#000" stroke="none" />
    <path d="M458 771h10" stroke="#f00" strokeWidth="6" />
    {balloons.map(([[x, y], [tx, ty]]) => (
      <g key={`${x}-${y}`}>
        <path d={`M${x} ${y}L${tx} ${ty}`} stroke="#e6e6e6" />
        <circle cx={x} cy={y} r="6" stroke="#00e5ee" fill="#000" />
        <rect x={x - 4} y={y - 4} width="8" height="8" stroke="none" fill="#f0f" />
      </g>
    ))}
  </g>
);

const DimensionSheet = () => (
  <g transform="translate(1030 495) scale(.33333)" stroke="#fff" strokeWidth="3">
    <path d="M10 22H787V571H10ZM22 34H772V556H22Z" />
    <path d="M16 48V28H38M758 28H781V48M16 544V565H38M758 565H781V544M397 22V34M397 556V571M10 295H22M772 295H787" />
    {/* front view */}
    <path d="M146 180V150L162 100Q170 84 185 82H260Q276 84 284 105L304 150V180M155 180V152L170 108Q176 94 190 94H256Q268 94 276 110L296 152V180M196 82v12M252 82v12M160 132l8-2M282 132l8-3M146 150h9M296 150h9" strokeWidth="4" />
    <path d="M146 198V222M155 198V222M296 198V222M304 198V222M133 275V245Q138 222 160 220H290Q310 224 314 245V275M144 275V245Q148 234 165 232H285Q302 234 305 245V275M133 250h11M305 250h9" />
    <path d="M168 218V258Q170 266 180 268H270Q280 266 281 258V218" strokeWidth="5" />
    <path d="M97 286H352M97 310L140 322M352 310L310 322M97 316L135 326M352 316L315 326M133 300V410H145V300M305 300V410H314V300M145 325H305M180 325v12M268 325v12M145 336H305M150 346H300M155 340V410Q160 440 185 448H270Q292 440 296 410V340M164 345V405Q170 430 188 437H265Q282 430 286 405V345M185 437v11M266 437v11M164 394H300M164 401H300M100 396H345" />
    <path d="M177 345V390M274 345V390M175 346H278M175 378H274" strokeWidth="6" />
    <path d="M160 322l26 8M290 322l-20 8" strokeWidth="6" />
    <rect x="115" y="351" width="13" height="91" rx="6" />
    <rect x="320" y="351" width="14" height="91" rx="6" />
    <path d="M165 132Q225 152 285 132M165 412H290" />
    <path d="M151 252v16M298 252v16M106 388v16M342 388v14" strokeWidth="7" />
    <path d="M137 182h10v-3h12M288 182h10v3h14M137 198h10v3h14M288 198h10v3h14M127 280h22M298 280h22M130 298h20M296 298h24M427 182h10v-3h16M427 203h10v4h12M440 290h14M438 306h14" stroke="#ff0" strokeWidth="4" />
    {/* side view */}
    <path d="M433 178V80Q439 72 445 80V178M433 102h12M433 135h12M433 205V235L445 265M445 205V225M445 220H456V240L452 250M448 265V355M454 225V355M436 335H683V343H436ZM512 333L530 318H632L652 333M525 330L535 322H628L640 330M655 345L665 360M675 345L712 450M675 360L706 455M706 455H712M690 400l8-3" />
    <path d="M450 225v20M450 255v12" strokeWidth="7" />
    <path d="M495 396L672 354" strokeWidth="6" />
    <path d="M604 345Q606 375 625 390Q650 405 682 402" />
    <g stroke="#30c800">
      <path d="M64 83V397M82 83V331M109 83V259M146 175H298M133 298H305M145 316H302M104 464H342M220 366v28M280 213h36M332 303l6 26M448 280H677M448 295H670M455 307H631M427 305V355M730 327V365M448 490H710M424 149h28M270 85l14-10M492 424l8 4" />
      <path d="M427 335h8M427 345h8M146 170v10M298 170v10M109 259h22" />
    </g>
    <g stroke="#6ff">
      <path d="M60 82H200M112 259H135M84 331H135M66 397H100M97 284V312M352 284V312M100 400V467M346 400V467M683 276V335M670 294V345M631 306V340M448 276V335M448 455V493M712 445V493M660 341H730M675 355H730M425 335H440M425 343H440M205 380h28" />
    </g>
    <Tags
      items={[
        [216, 139, 17, 7], [214, 170, 18, 9], [208, 282, 30, 7], [214, 295, 18, 6], [214, 313, 18, 6], [61, 229, 7, 21],
        [79, 199, 6, 15], [106, 160, 6, 18], [214, 460, 18, 9], [316, 208, 15, 9], [216, 408, 17, 7], [334, 331, 9, 9],
        [217, 358, 6, 8], [454, 145, 19, 6], [553, 277, 25, 6], [550, 292, 18, 6], [532, 304, 15, 6], [424, 307, 6, 15],
        [727, 341, 6, 12], [565, 487, 33, 9],
      ]}
    />
    <path d="M277 85l12-15 4 3-12 15zM498 428l4-5 22 12-3 5zM618 388l4-4 20 14-3 4z" stroke="#d69a00" />
    <Wheel cx={448} cy={403} color="#fff" cross="#f00" heavy />
    <path d="M628 342h8M666 355h10" stroke="#f00" strokeWidth="5" />
    {/* title block */}
    <path d="M606 531H655V519H772V556H606Z" fill="#fff" stroke="none" />
    <path d="M658 525H708M658 534H708M668 549H740M614 540v8M746 527h22M742 543h30M638 540h28M714 526h22v8h-22z" stroke="#000" strokeDasharray="10 4" />
    <path d="M681 546h12" stroke="#f00" strokeWidth="6" />
  </g>
);

const TubeSheet = () => (
  <g transform="translate(1340 450) scale(.33333)" stroke="#fff" strokeWidth="3">
    <path d="M351 52H2000M2000 317H49V706H2000M2000 331H61V691H2000M55 342V325H72M55 682V700H72M322 317V331M322 691V706M49 511H61" />
    <path d="M2000 382H112V394H2000M127 382v4M127 390v4M190 382v6M2000 553H112V562H2000M127 553v4M2000 607H112V619H2000M112 607v12" />
    <path d="M115 613H2000" strokeDasharray="14 5 28 6" />
    <path d="M105 388H2000M102 559H2000" stroke="#e81010" strokeDasharray="50 10 14 10" />
    <path d="M190 608v10M124 610h6" stroke="#f00" />
    <g stroke="#30c800">
      <path d="M117 370H2000M112 366V380M91 390V558M88 387v8M88 552v8M97 597V623M117 652H2000M117 643H190M117 631H133M127 607H140" />
    </g>
    <path d="M90 388H106M90 559H104M97 607H112M97 613H112M112 372V382M112 607V653M190 617V643M127 607V631" stroke="#6ff" />
    <Tags items={[[292, 367, 16, 7], [88, 466, 7, 16], [94, 583, 7, 13], [133, 628, 10, 7], [145, 640, 16, 7], [274, 649, 19, 7]]} />
    <path d="M133 603l18-20 6 3-18 20z" stroke="#d69a00" />
  </g>
);

const DocumentTab = () => (
  <div className="flex h-[22px] shrink-0 items-end border-b border-[#c9c9c9] bg-[#e6e6e6] pl-[2px]">
    <svg width="21" height="20" viewBox="0 0 21 20" className="shrink-0" aria-hidden="true">
      <path d="M0 20L19.500 0.500H21V20z" fill="#fff" />
      <path d="M0 20L19.500 0.500H21" fill="none" stroke="#a9a9a9" />
    </svg>
    <div className="flex h-[20px] items-center rounded-tr-xs border-t border-r border-[#a9a9a9] bg-white pr-[6px] pl-[12px] text-[13px] leading-[18px] font-bold whitespace-nowrap text-[#444]">
      <span className="pb-[2px]">多功能购物车设计 全套CAD图纸.dwg</span>
      <button type="button" aria-label="关闭文档" className="ml-[18px]">
        <svg width="8" height="8" viewBox="0 0 8 8" stroke="#777" strokeWidth="1.300"><path d="M0.500 0.500l7 7M7.500 0.500l-7 7" /></svg>
      </button>
    </div>
  </div>
);

const navIcons = [
  ['第一页', 'M0 0h1v8H0zM6 0v8L2 4z'],
  ['上一页', 'M5 0v8L1 4z'],
  ['下一页', 'M2 0v8l4-4z'],
  ['最后一页', 'M1 0v8l4-4zM6 0h1v8H6z'],
];

const SheetTabs = () => (
  <div className="flex h-[17px] shrink-0 items-stretch border-t border-[#888] bg-[#e6e6e6] text-[12px] leading-[13px] text-[#444]">
    <div className="flex items-center gap-[9px] pt-[1px] pl-[3px]">
      {navIcons.map(([label, d]) => (
        <button key={label} type="button" aria-label={label}>
          <svg width="7" height="8" viewBox="0 0 7 8" fill="#777"><path d={d} /></svg>
        </button>
      ))}
    </div>
    <svg width="10" height="16" viewBox="0 0 10 16" className="ml-[6px]" aria-hidden="true">
      <path d="M0 0h10v16H8z" fill="#fff" /><path d="M0 0l8 15.500h2" stroke="#999" fill="none" />
    </svg>
    <button type="button" className="border-b border-[#999] bg-white pb-[3px] text-[14px] font-bold">模型</button>
    <svg width="14" height="16" viewBox="0 0 14 16" aria-hidden="true">
      <path d="M0 0h11L4 16H0z" fill="#fff" /><path d="M0 15.500h4L11 0M8.500 8L12 15.500h2" stroke="#999" fill="none" />
    </svg>
    <button type="button" className="border-b border-[#999] pb-[2px]">Layout1</button>
    <svg width="12" height="16" viewBox="1 0 12 16" aria-hidden="true">
      <path d="M0 15.500h3L10 0M7.500 8L11 15.500h3" stroke="#999" fill="none" />
    </svg>
    <button type="button" className="border-b border-[#999] pb-[2px]">Layout2</button>
    <svg width="12" height="16" viewBox="1 0 12 16" aria-hidden="true">
      <path d="M0 15.500h3L10 0" stroke="#999" fill="none" />
    </svg>
  </div>
);

const Workspace = () => (
  <main className="flex min-w-0 flex-1 flex-col">
    <DocumentTab />
    <div className="min-h-0 flex-1 overflow-hidden bg-black">
      <svg width="100%" height="100%" fill="none" shapeRendering="crispEdges" role="img" aria-label="多功能购物车设计">
        {/* drawing coordinates start at the viewport's 250,178 */}
        <g transform="translate(-250 -178)">
          <rect x="277.500" y="180.500" width="419" height="507" stroke="#fff" />
          <Cart />
          <AssemblySheet />
          <DimensionSheet />
          <TubeSheet />
        </g>
      </svg>
    </div>
    <SheetTabs />
  </main>
);

const CommandLine = () => (
  <div className="ml-6 h-[41px] shrink-0 border-t-6 border-[#cdcdcd] bg-[#e6e6e6]">
    <label htmlFor="command" className="block h-[25px] pl-[4px] text-[13px] leading-[20px] text-[#444]">命令行</label>
    <div className="h-[20px] border-t border-l border-[#555] bg-white">
      <input id="command" type="text" defaultValue="命令:" className="mt-[2px] block h-[16px] w-full pl-px font-[Liberation_Mono,Noto_Sans_CJK_SC,monospace] text-[12px] leading-[16px] text-black outline-none" />
    </div>
  </div>
);

export default function App() {
  return (
    <div className="flex h-screen flex-col overflow-hidden bg-[#e6e6e6] font-[Noto_Sans,Noto_Sans_CJK_SC,sans-serif]">
      <header className="shrink-0 bg-[#2b579a]">
        <TitleBar />
        <MenuBar />
      </header>
      <Ribbon />
      <div className="flex min-h-0 flex-1">
        <SideStrip />
        <PropertyPanel />
        <div className="ml-[3px] w-[4px] shrink-0 bg-[#d9d9d9]" />
        <Workspace />
      </div>
      <CommandLine />
    </div>
  );
}
